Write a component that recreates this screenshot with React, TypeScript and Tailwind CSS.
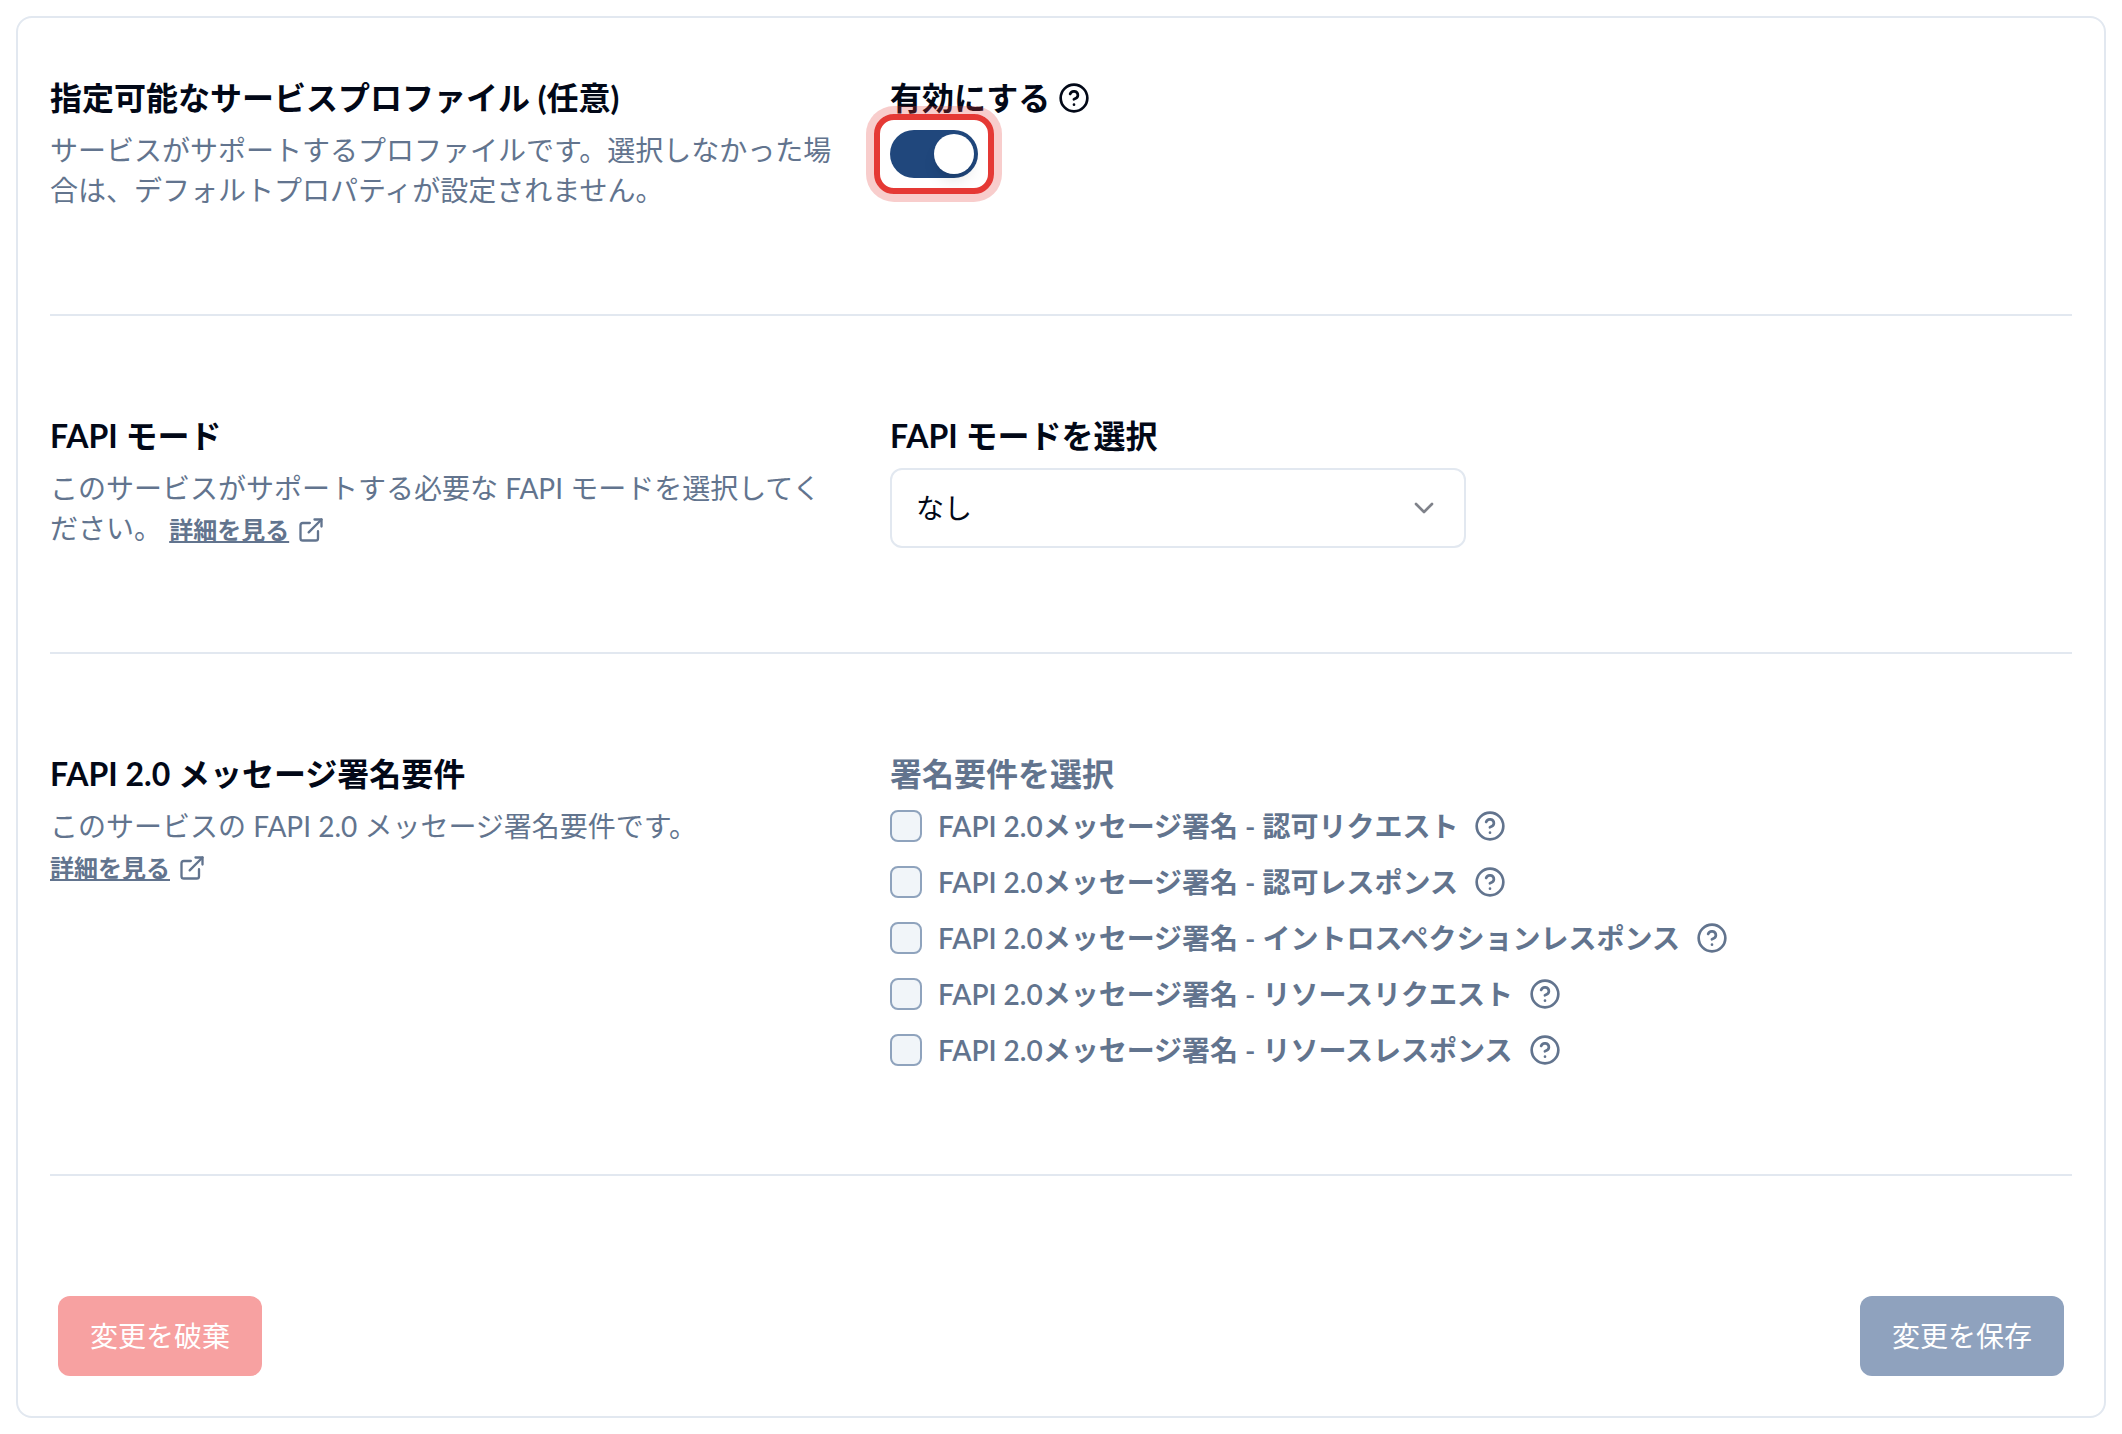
import { useState } from "react";
import type { ReactNode } from "react";
import { ChevronDown, CircleHelp, ExternalLink } from "lucide-react";

const REQUIREMENTS = [
  { id: "authz-request", label: "FAPI 2.0メッセージ署名 - 認可リクエスト" },
  { id: "authz-response", label: "FAPI 2.0メッセージ署名 - 認可レスポンス" },
  { id: "introspection-response", label: "FAPI 2.0メッセージ署名 - イントロスペクションレスポンス" },
  { id: "resource-request", label: "FAPI 2.0メッセージ署名 - リソースリクエスト" },
  { id: "resource-response", label: "FAPI 2.0メッセージ署名 - リソースレスポンス" },
];

type SectionProps = {
  title: string;
  description: ReactNode;
  children: ReactNode;
};

function Section({ title, description, children }: SectionProps) {
  return (
    <section className="grid grid-cols-[2fr_3fr] gap-x-[52px] border-b-2 border-slate-200 pt-24 pb-[104px] first:pt-14">
      <div className="flex flex-col gap-2">
        <h2 className="text-[32px] leading-[48px] font-bold">{title}</h2>
        <p className="text-[28px] leading-[40px] text-slate-500">{description}</p>
      </div>
      <div className="flex flex-col items-start gap-2">{children}</div>
    </section>
  );
}

function HelpButton() {
  return (
    <button type="button" aria-label="ヘルプ" className="shrink-0">
      <CircleHelp className="size-8" />
    </button>
  );
}

function DetailsLink() {
  return (
    <a href="#details" className="inline-flex items-center gap-2 text-2xl leading-8 font-bold">
      <span className="underline decoration-2 underline-offset-2">詳細を見る</span>
      <ExternalLink className="size-7" />
    </a>
  );
}

export default function App() {
  const [enabled, setEnabled] = useState(true);
  const [mode, setMode] = useState("none");

  return (
    <main className="p-4 font-[Lato,'Noto_Sans_CJK_JP',sans-serif] text-[#020817]">
      <form className="rounded-2xl border-2 border-slate-200 px-8 pb-10">
        <Section
          title="指定可能なサービスプロファイル (任意)"
          description="サービスがサポートするプロファイルです。選択しなかった場合は、デフォルトプロパティが設定されません。"
        >
          <div className="flex items-center gap-2">
            <label htmlFor="enabled" className="text-[32px] leading-[48px] font-bold">
              有効にする
            </label>
            <HelpButton />
          </div>
          <div className="relative flex">
            <input
              id="enabled"
              type="checkbox"
              role="switch"
              checked={enabled}
              onChange={(e) => setEnabled(e.target.checked)}
              className="h-12 w-[88px] appearance-none rounded-full bg-slate-200 p-1 after:block after:size-10 after:rounded-full after:bg-white after:shadow-lg checked:bg-[#20477c] checked:after:ml-10"
            />
            {/* highlight around the switch */}
            <span className="pointer-events-none absolute -inset-4 rounded-[20px] border-6 border-[#e53935] ring-8 ring-[#e53935]/25" />
          </div>
        </Section>

        <Section
          title="FAPI モード"
          description={
            <>
              このサービスがサポートする必要な FAPI モードを選択してください。 <DetailsLink />
            </>
          }
        >
          <label htmlFor="mode" className="text-[32px] leading-[48px] font-bold">
            FAPI モードを選択
          </label>
          <div className="relative w-[576px] max-w-full">
            <select
              id="mode"
              value={mode}
              onChange={(e) => setMode(e.target.value)}
              className="h-20 w-full appearance-none rounded-xl border-2 border-slate-200 bg-white px-6 text-[28px] leading-[40px]"
            >
              <option value="none">なし</option>
            </select>
            <ChevronDown className="pointer-events-none absolute top-6 right-[26px] size-8 opacity-50" />
          </div>
        </Section>

        <Section
          title="FAPI 2.0 メッセージ署名要件"
          description={
            <>
              このサービスの FAPI 2.0 メッセージ署名要件です。
              <br />
              <DetailsLink />
            </>
          }
        >
          <fieldset disabled className="text-slate-500">
            <legend className="mb-2 text-[32px] leading-[48px] font-bold">署名要件を選択</legend>
            <div className="flex flex-col gap-4">
              {REQUIREMENTS.map(({ id, label }) => (
                <div key={id} className="flex items-center gap-4">
                  <input
                    id={id}
                    type="checkbox"
                    className="size-8 shrink-0 appearance-none rounded-lg border-2 border-[#8fa3bd] bg-slate-100"
                  />
                  <label htmlFor={id} className="text-[28px] leading-[40px] font-semibold">
                    {label}
                  </label>
                  <HelpButton />
                </div>
              ))}
            </div>
          </fieldset>
        </Section>

        <div className="flex justify-between px-2 pt-[120px]">
          <button
            type="button"
            disabled
            className="h-20 rounded-xl bg-red-500 px-8 text-[28px] leading-[40px] text-white disabled:bg-[#f7a1a1]"
          >
            変更を破棄
          </button>
          <button
            type="submit"
            disabled
            className="h-20 rounded-xl bg-[#20477c] px-8 text-[28px] leading-[40px] text-white disabled:bg-[#8fa2be]"
          >
            変更を保存
          </button>
        </div>
      </form>
    </main>
  );
}
